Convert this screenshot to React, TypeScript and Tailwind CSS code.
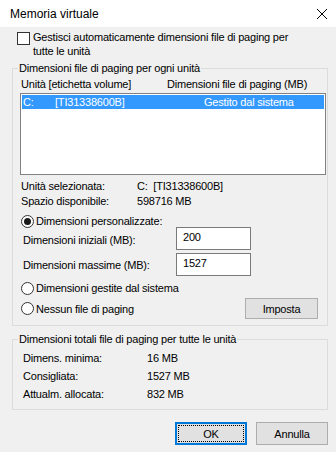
import React from "react";

function Radio({ checked }: { checked?: boolean }) {
  return (
    <span className="flex h-[13px] w-[13px] shrink-0 items-center justify-center rounded-full border border-[#333333] bg-white">
      {checked && <span className="h-[7px] w-[7px] rounded-full bg-[#1a1a1a]" />}
    </span>
  );
}

export default function App() {
  return (
    <div
      className="flex h-[452px] w-[336px] flex-col whitespace-nowrap bg-[#f0f0f0] text-[11px] leading-[14px] tracking-[-0.2px] text-black"
      style={{ fontFamily: '"Liberation Sans", Arial, sans-serif' }}
    >
      <div className="flex h-[27px] shrink-0 items-center justify-between bg-white pl-[10px] pr-[9px]">
        <span className="text-[12px] tracking-normal">Memoria virtuale</span>
        <svg width="10" height="10" viewBox="0 0 10 10" stroke="#000" strokeWidth="1">
          <path d="M0 0L10 10M10 0L0 10" />
        </svg>
      </div>

      <div className="flex flex-col pl-[12px] pr-[8px]">
        <label className="mt-[3px] flex gap-[3px] pl-[5px]">
          <span className="mt-[2px] h-[13px] w-[13px] shrink-0 border border-[#333333] bg-white" />
          <span>
            Gestisci automaticamente dimensioni file di paging per
            <br />
            tutte le unità
          </span>
        </label>

        <fieldset className="mt-[3px] border border-[#dcdcdc] pb-[6px] pl-[7px] pr-[1px] pt-[2px]">
          <legend className="ml-[-2px] px-[1px]">Dimensioni file di paging per ogni unità</legend>
          <div className="flex pl-[1px]">
            <span className="w-[146px]">Unità [etichetta volume]</span>
            <span>Dimensioni file di paging (MB)</span>
          </div>
          <div className="mt-[2px] h-[82px] border border-[#828282] bg-white p-[1px]">
            <div className="flex h-[14px] bg-[#3399ff] pl-[1px] text-white">
              <span className="w-[32px]">C:</span>
              <span className="w-[149px]">[TI31338600B]</span>
              <span>Gestito dal sistema</span>
            </div>
          </div>

          <div className="mt-[4px] flex pl-[1px]">
            <span className="w-[116px]">Unità selezionata:</span>
            <span>C:&nbsp; [TI31338600B]</span>
          </div>
          <div className="mt-[1px] flex pl-[1px]">
            <span className="w-[116px]">Spazio disponibile:</span>
            <span>598716 MB</span>
          </div>

          <div className="mt-[6px] flex items-center gap-[2px] pl-[1px]">
            <Radio checked />
            <span>Dimensioni personalizzate:</span>
          </div>
          <div className="mt-[-1px] flex items-center pl-[3px]">
            <span className="mt-[3px] w-[153px]">Dimensioni iniziali (MB):</span>
            <div className="h-[23px] w-[75px] border border-[#7a7a7a] bg-white pl-[6px] pt-[2px]">200</div>
          </div>
          <div className="mt-[3px] flex items-center pl-[3px]">
            <span className="mt-[1px] w-[153px]">Dimensioni massime (MB):</span>
            <div className="h-[23px] w-[75px] border border-[#7a7a7a] bg-white pl-[6px] pt-[2px]">1527</div>
          </div>

          <div className="mt-[5px] flex items-center gap-[2px] pl-[1px]">
            <Radio />
            <span>Dimensioni gestite dal sistema</span>
          </div>
          <div className="mt-[3px] flex h-[21px] items-center gap-[2px] pl-[1px]">
            <Radio />
            <span>Nessun file di paging</span>
            <button className="ml-auto mr-[8px] h-[21px] w-[73px] border border-[#adadad] bg-[#e1e1e1]">
              Imposta
            </button>
          </div>
        </fieldset>

        <fieldset className="mt-[6px] border border-[#dcdcdc] pb-[8px] pl-[7px] pr-[1px] pt-[5px]">
          <legend className="ml-[-2px] px-[1px]">Dimensioni totali file di paging per tutte le unità</legend>
          <div className="flex flex-col gap-[4px] pl-[3px]">
            <div className="flex">
              <span className="w-[124px]">Dimens. minima:</span>
              <span>16 MB</span>
            </div>
            <div className="flex">
              <span className="w-[124px]">Consigliata:</span>
              <span>1527 MB</span>
            </div>
            <div className="flex">
              <span className="w-[124px]">Attualm. allocata:</span>
              <span>832 MB</span>
            </div>
          </div>
        </fieldset>

        <div className="mt-[12px] flex justify-end gap-[9px]">
          <button className="flex h-[23px] w-[72px] border-2 border-[#0078d7] bg-[#e1e1e1] p-[1px]">
            <span className="flex flex-1 items-center justify-center border border-dotted border-black">OK</span>
          </button>
          <button className="h-[23px] w-[72px] border border-[#adadad] bg-[#e1e1e1]">Annulla</button>
        </div>
      </div>
    </div>
  );
}
